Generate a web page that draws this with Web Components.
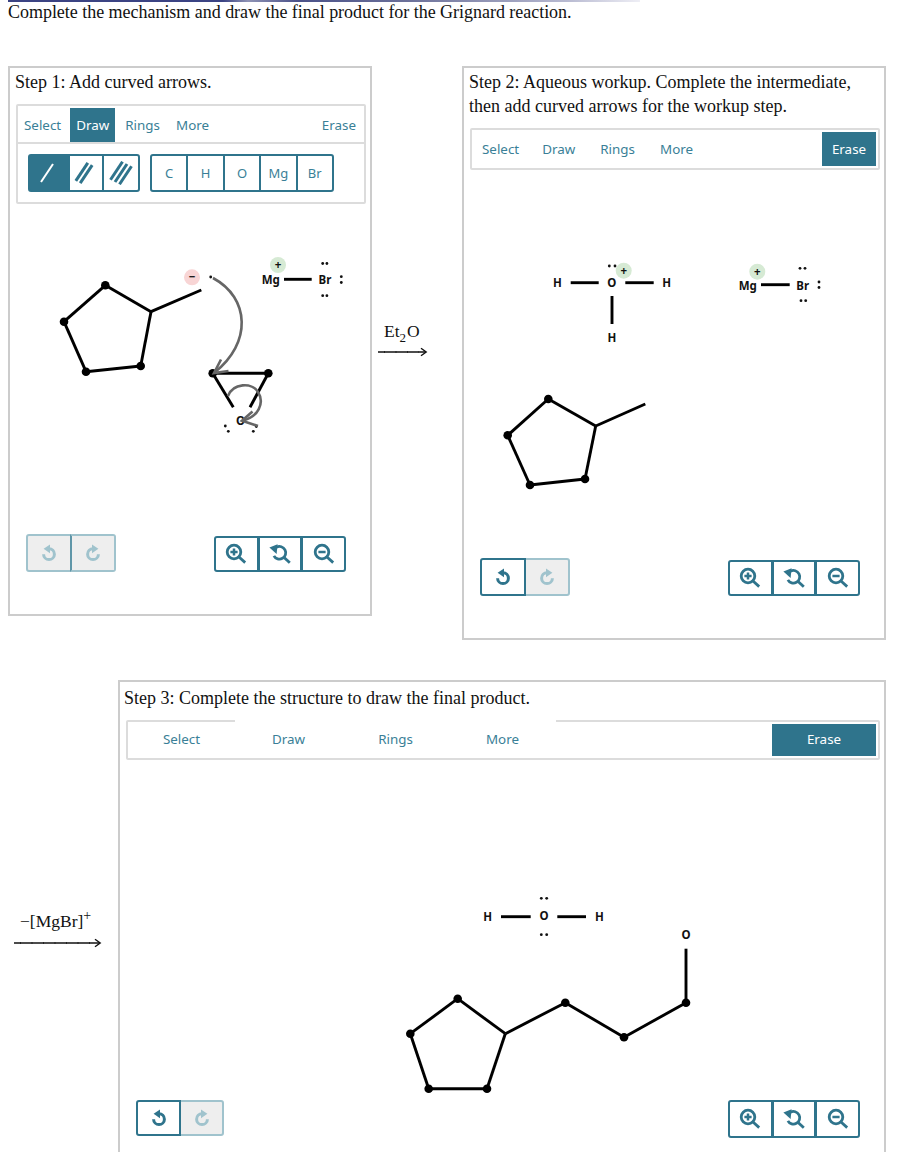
<!DOCTYPE html>
<html lang="en">
<head>
<meta charset="utf-8">
<title>Grignard mechanism</title>
<style>
html,body{margin:0;padding:0;height:1152px;overflow:hidden;background:#fff}
body{font-family:"Liberation Serif",serif;color:#111}
.row{display:flex;align-items:flex-start}
.row2{margin-top:40px}
[slot=heading]{display:block}
</style>
</head>
<body>
<top-rule></top-rule>
<question-title>Complete the mechanism and draw the final product for the Grignard reaction.</question-title>

<div class="row" style="margin-top:44px">
  <chem-panel style="margin-left:8px;width:364px;height:550px">
    <span slot="heading">Step 1: Add curved arrows.</span>
    <chem-toolbar slot="toolbar" style="--tab-h:34px;--pad:6px;--row-left:0">
      <tab-btn slot="tabs">Select</tab-btn>
      <tab-btn slot="tabs" active style="margin-left:3px">Draw</tab-btn>
      <tab-btn slot="tabs" style="margin-left:4px">Rings</tab-btn>
      <tab-btn slot="tabs" style="margin-left:4px">More</tab-btn>
      <tab-btn slot="tabs" style="margin-left:auto">Erase</tab-btn>
      <btn-group slot="tools" style="--h:38px;--ov:2px">
        <btn-cell selected style="--w:42px"><bond-icon n="1"></bond-icon></btn-cell>
        <btn-cell style="--w:36px"><bond-icon n="2"></bond-icon></btn-cell>
        <btn-cell style="--w:38px"><bond-icon n="3"></bond-icon></btn-cell>
      </btn-group>
      <btn-group slot="tools" style="--h:38px;--ov:2px;--w:38.4px;margin-left:10px">
        <btn-cell>C</btn-cell><btn-cell>H</btn-cell><btn-cell>O</btn-cell><btn-cell>Mg</btn-cell><btn-cell>Br</btn-cell>
      </btn-group>
    </chem-toolbar>
    <mol-step-one slot="canvas"></mol-step-one>
    <btn-group slot="left" style="--h:38px;--w:46px;--ov:2px">
      <btn-cell disabled><chem-icon name="undo" class="off"></chem-icon></btn-cell>
      <btn-cell disabled style="border-left-color:#5f96a8"><chem-icon name="redo"></chem-icon></btn-cell>
    </btn-group>
    <zoom-tools slot="right"></zoom-tools>
  </chem-panel>

  <rxn-arrow style="margin:253px 0 0 6px;width:49px;--label-pad:6px;--gap:4px">
    <span>Et<sub style="font-size:13px;line-height:0;margin-right:1px">2</sub>O</span>
  </rxn-arrow>

  <chem-panel style="margin-left:35px;width:424px;height:574px">
    <span slot="heading">Step 2: Aqueous workup. Complete the intermediate,<br>then add curved arrows for the workup step.</span>
    <chem-toolbar slot="toolbar" style="--tab-h:34px;--pad:8px">
      <tab-btn slot="tabs">Select</tab-btn>
      <tab-btn slot="tabs" style="margin-left:7px">Draw</tab-btn>
      <tab-btn slot="tabs" style="margin-left:9px">Rings</tab-btn>
      <tab-btn slot="tabs" style="margin-left:9px">More</tab-btn>
      <tab-btn slot="tabs" active style="margin-left:auto;width:54px;--pad:0">Erase</tab-btn>
    </chem-toolbar>
    <mol-step-two slot="canvas"></mol-step-two>
    <btn-group slot="left" style="--h:38px;--w:46px;--ov:2px">
      <btn-cell><chem-icon name="undo"></chem-icon></btn-cell>
      <btn-cell disabled><chem-icon name="redo"></chem-icon></btn-cell>
    </btn-group>
    <zoom-tools slot="right"></zoom-tools>
  </chem-panel>
</div>

<div class="row row2">
  <rxn-arrow style="margin:229px 0 0 14px;width:87px;--label-pad:6px;--gap:5px">
    <span>−[MgBr]<sup style="font-size:14px;line-height:0">+</sup></span>
  </rxn-arrow>
  <chem-panel style="margin-left:17px;width:768px;height:520px;--head-top:4px;--head-left:4px;--controls-align:flex-start">
    <span slot="heading">Step 3: Complete the structure to draw the final product.</span>
    <chem-toolbar slot="toolbar" style="--tab-h:32px;--row-left:0;--pad:0;--tab-shift:2px">
      <tab-btn slot="tabs" style="width:107px">Select</tab-btn>
      <tab-btn slot="tabs" cover style="width:107px">Draw</tab-btn>
      <tab-btn slot="tabs" cover style="width:107px">Rings</tab-btn>
      <tab-btn slot="tabs" cover style="width:107px">More</tab-btn>
      <tab-btn slot="tabs" active style="margin-left:auto;width:104px">Erase</tab-btn>
    </chem-toolbar>
    <mol-step-three slot="canvas"></mol-step-three>
    <btn-group slot="left" style="--h:36px;--w:45px;--ov:2px">
      <btn-cell><chem-icon name="undo"></chem-icon></btn-cell>
      <btn-cell disabled><chem-icon name="redo"></chem-icon></btn-cell>
    </btn-group>
    <zoom-tools slot="right" style="--zh:38px"></zoom-tools>
  </chem-panel>
</div>

<script>
const TEAL='#2f748c';
function def(name,html,extra){
  const t=document.createElement('template');t.innerHTML=html;
  customElements.define(name,class extends HTMLElement{
    constructor(){super();this.attachShadow({mode:'open'}).appendChild(t.content.cloneNode(true));if(extra)extra(this.shadowRoot,this);}
  });
}
def('top-rule',`<style>:host{display:block;height:2px;margin-left:8px;width:632px;
 background:linear-gradient(90deg,#3b4383 0,#3b4383 215px,#8f93b5 240px,#4a5189 290px,#6b7099 400px,#b9bbd2 560px,#eeeef5 632px)}</style>`);
def('question-title',`<style>:host{display:block;margin-left:8px;font-size:18px;line-height:20px;height:20px;white-space:nowrap;letter-spacing:-.03px}</style><slot></slot>`);
def('chem-panel',`<style>
:host{display:flex;flex-direction:column;box-sizing:border-box;border:2px solid #ccc;flex:none;background:#fff}
.h{padding:var(--head-top,2px) 5px 0 var(--head-left,5px);font-size:18px;line-height:24px;margin-bottom:10px;white-space:nowrap}
.t{margin:0 4px 0 6px}
.c{flex:none}
.b{display:flex;justify-content:space-between;align-items:var(--controls-align,flex-end);padding:0 24px 0 16px}
</style><div class="h"><slot name="heading"></slot></div><div class="t"><slot name="toolbar"></slot></div>
<div class="c"><slot name="canvas"></slot></div><div class="b"><slot name="left"></slot><slot name="right"></slot></div>`);
def('chem-toolbar',`<style>
:host{display:block;box-sizing:border-box;border:2px solid #dcdcdc;border-radius:2px;font-family:"Noto Sans",sans-serif;font-size:13.4px}
.tabs{display:flex;padding:2px 2px 2px var(--row-left,2px)}
.tools{display:none;padding:10px;border-top:2px solid #dcdcdc}
.tools.on{display:flex}
</style><div class="tabs"><slot name="tabs"></slot></div><div class="tools"><slot name="tools"></slot></div>`,(s,h)=>{
  if(h.querySelector('[slot=tools]')){s.querySelector('.tools').classList.add('on');s.querySelector('.tabs').style.paddingBottom='0';}
});
def('tab-btn',`<style>
:host{display:flex;align-items:center;justify-content:center;box-sizing:border-box;height:var(--tab-h,34px);padding:0 var(--pad,6px) var(--tab-shift,0);color:#3a7f97;position:relative;flex:none;white-space:nowrap}
:host([active]){background:${TEAL};color:#fff}
:host([cover])::before{content:"";position:absolute;left:0;right:0;top:-4px;height:2px;background:#fff}
</style><slot></slot>`);
def('btn-group',`<style>:host{display:inline-flex;flex:none;font-family:"Noto Sans",sans-serif;font-size:13px}</style><slot></slot>`);
def('btn-cell',`<style>
:host{display:flex;align-items:center;justify-content:center;box-sizing:border-box;width:var(--w);height:var(--h);border:2px solid ${TEAL};margin-left:calc(var(--ov,2px) * -1);color:#3a7f97;background:#fff;position:relative;z-index:1}
:host(:first-child){margin-left:0;border-radius:3px 0 0 3px}
:host(:last-child){border-radius:0 3px 3px 0}
:host([selected]){background:${TEAL};padding-right:4px}
:host([disabled]){background:#eee;border-color:#a0c3cd;z-index:0}
</style><slot></slot>`);
def('bond-icon',`<style>:host{display:block;width:24px;height:24px}svg{display:block}</style><svg width="24" height="24" viewBox="0 0 24 24" fill="none" stroke-linecap="butt"></svg>`,(s,h)=>{
  const n=+h.getAttribute('n'),c=n==1?'#fff':TEAL,w=n==1?2:3,off={1:[0],2:[-2.2,2.2],3:[-4.5,0,4.5]}[n];
  s.querySelector('svg').innerHTML=off.map(o=>`<line x1="${6+o}" y1="${21+o*.5}" x2="${18+o}" y2="${3+o*.5}" stroke="${c}" stroke-width="${w}"/>`).join('');
  if(n==2)s.querySelector('svg').style.transform='translateX(-2px)';
});
const ARC=`<path d="M9 4.8a5.4 5.4 0 1 1-5.4 5.4" stroke-width="3"/><path d="M10 .4v8.8L3.6 4.8z" fill="currentColor" stroke="none"/>`;
const ICONS={undo:ARC,redo:`<g transform="matrix(-1 0 0 1 18 0)">${ARC}</g>`};
def('chem-icon',`<style>:host{display:block;width:18px;height:18px;color:${TEAL}}:host([name=redo]),:host(.off){color:#a0c3cd}svg{display:block}</style><svg width="18" height="18" viewBox="0 0 18 18" fill="none" stroke="currentColor"></svg>`,(s,h)=>{
  s.querySelector('svg').innerHTML=ICONS[h.getAttribute('name')];
});
const ZI={
 in:`<circle cx="9" cy="9" r="6.8" stroke-width="2.8"/><path d="M14 14l6.2 5.6" stroke-width="2.8"/><path d="M5.4 9h7.2M9 5.4v7.2" stroke-width="2.5"/>`,
 out:`<circle cx="9" cy="9" r="6.8" stroke-width="2.8"/><path d="M14 14l6.2 5.6" stroke-width="2.8"/><path d="M5.4 9h7.2" stroke-width="2.5"/>`,
 reset:`<path d="M7.5 4.2a6.3 6.3 0 1 1-2.6 8.6" stroke-width="2.8"/><path d="M14.8 14.2l6 5.6" stroke-width="2.8"/><path d="M.4 4.6L8.6 1.2 7.6 11z" fill="currentColor" stroke="none"/>`
};
def('zoom-icon',`<style>:host{display:block;width:22px;height:22px;color:${TEAL}}svg{display:block}</style><svg width="22" height="22" viewBox="0 0 22 22" fill="none" stroke="currentColor"></svg>`,(s,h)=>{
  s.querySelector('svg').innerHTML=ZI[h.getAttribute('k')];
});
def('zoom-tools',`<style>:host{display:block;flex:none}</style>
<btn-group style="--h:var(--zh,36px);--w:44.67px;--ov:1px">
<btn-cell><zoom-icon k="in"></zoom-icon></btn-cell><btn-cell><zoom-icon k="reset"></zoom-icon></btn-cell><btn-cell><zoom-icon k="out"></zoom-icon></btn-cell>
</btn-group>`);
def('rxn-arrow',`<style>
:host{display:block;flex:none;font-size:17.5px;line-height:24px}
.l{padding-left:var(--label-pad,6px);white-space:nowrap}
svg{display:block;margin-top:var(--gap,2px);width:100%;height:10px;overflow:visible}
</style><div class="l"><slot></slot></div>
<svg viewBox="0 0 100 10" preserveAspectRatio="none"></svg>`,(s,h)=>{
  const w=parseFloat(h.style.width),v=s.querySelector('svg');
  v.setAttribute('viewBox',`0 0 ${w} 10`);
  v.innerHTML=`<line x1="0" y1="5" x2="${w-1}" y2="5" stroke="#111" stroke-width="1.4"/>
  <line x1="6" y1="5" x2="${w-8}" y2="5" stroke="#111" stroke-width="2.2" stroke-dasharray="1 10.5" opacity=".7"/>
  <path d="M${w-6} 1.2L${w-.8} 5L${w-6} 8.8" fill="none" stroke="#111" stroke-width="1.4"/>`;
});

function mol(cfg){
  const [x,y,w,h]=cfg.box;
  const L=(a,b,c,d)=>`<line x1="${a}" y1="${b}" x2="${c}" y2="${d}" stroke="#000" stroke-width="2.9"/>`;
  let o=`<svg xmlns="http://www.w3.org/2000/svg" width="${w}" height="${h}" viewBox="${x} ${y} ${w} ${h}">`;
  (cfg.charges||[]).forEach(([cx,cy,f,t])=>{o+=`<circle cx="${cx}" cy="${cy}" r="8" fill="${f}"/><text x="${cx}" y="${cy-.5}" class="l">${t}</text>`;});
  (cfg.bonds||[]).forEach(b=>o+=L(...b));
  (cfg.nodes||[]).forEach(([a,b])=>o+=`<circle cx="${a}" cy="${b}" r="4.3" fill="#000"/>`);
  (cfg.labels||[]).forEach(([a,b,t])=>o+=`<text x="${a}" y="${b}" class="l">${t}</text>`);
  (cfg.dots||[]).forEach(([a,b])=>o+=`<circle cx="${a}" cy="${b}" r="1.4" fill="#111"/>`);
  o+=cfg.extra||'';
  return `<style>:host{display:block}svg{display:block}.l{font:700 11.5px "Noto Sans",sans-serif;fill:#111;text-anchor:middle;dominant-baseline:central}</style>`+o+`</svg>`;
}
const GREEN='#d6ead4',RED='#f8d5d5';
def('mol-step-one',mol({
  box:[10,204,360,330],
  charges:[[192,277.3,RED,'−'],[278,265,GREEN,'+']],
  bonds:[[105.3,285.3,151,311.7],[105.3,285.3,64,321.7],[64,321.7,86,371.7],[86,371.7,140.7,366],[140.7,366,151,311.7],[151,311.7,201.3,290],
         [284,279.3,311.7,279.3],[212.7,373.3,268.3,373.3],[212.7,373.3,233.3,407.3],[268.3,373.3,250,407.3]],
  nodes:[[105.3,285.3],[64,321.7],[86,371.7],[140.7,366],[212.7,373.3],[268.3,373.3]],
  labels:[[270.7,279,'Mg'],[325,279,'Br'],[240.5,420.5,'O']],
  dots:[[322.7,263.5],[326.9,263.5],[322.7,295.7],[326.9,295.7],[341.3,276.7],[341.3,282.5],[210.7,277],[225.3,426],[228.3,431.3],[256.3,426.5],[253.3,431.3]],
  extra:`<g fill="none" stroke="#666" stroke-width="2.6">
    <path d="M213 278C250 298 252 343 214.5 372.5"/><path d="M221 359.5L214 373L228.5 371"/>
    <path d="M228 396C233 383 252 382 258 392C265 403 258 417 243 420.5"/><path d="M252.5 411.5L242 420.7L258 426"/></g>`
}));
def('mol-step-two',mol({
  box:[464,170,420,388],
  charges:[[623.7,270.7,GREEN,'+'],[757.3,271.7,GREEN,'+']],
  bonds:[[570.7,282.7,598.7,282.7],[625.3,282.7,653.7,282.7],[612,296,612,324],[761,284.7,789.7,284.7],
         [548.3,399,595.7,426],[548.3,399,507.7,435.3],[507.7,435.3,530,485],[530,485,585,479],[585,479,595.7,426],[595.7,426,645.3,404]],
  nodes:[[548.3,399],[507.7,435.3],[530,485],[585,479]],
  labels:[[557.3,282.7,'H'],[611.7,282.7,'O'],[666.7,282.7,'H'],[612,337,'H'],[747.7,285,'Mg'],[802.7,285,'Br']],
  dots:[[609.3,266],[615,266],[800,268.3],[805,268.3],[801,300.7],[805.7,300.7],[819,282],[819,287.5]]
}));
def('mol-step-three',mol({
  box:[120,760,764,340],
  bonds:[[501,916.7,530.7,916.7],[557.3,916.7,586,916.7],[686,948.7,686,1002.7],[686,1002.7,624,1037.3],[624,1037.3,565.3,1002.7],[565.3,1002.7,505.3,1033.7],
         [505.3,1033.7,457.7,998.7],[457.7,998.7,410.3,1033.7],[410.3,1033.7,428.7,1088.7],[428.7,1088.7,487,1088.7],[487,1088.7,505.3,1033.7]],
  nodes:[[686,1002.7],[624,1037.3],[565.3,1002.7],[457.7,998.7],[410.3,1033.7],[428.7,1088.7],[487,1088.7]],
  labels:[[487.7,916.7,'H'],[544,915.7,'O'],[599.3,916.7,'H'],[686,934.7,'O']],
  dots:[[541.3,898.3],[546.7,898.3],[541.3,934.7],[546.7,934.7]]
}));
</script>
</body>
</html>
